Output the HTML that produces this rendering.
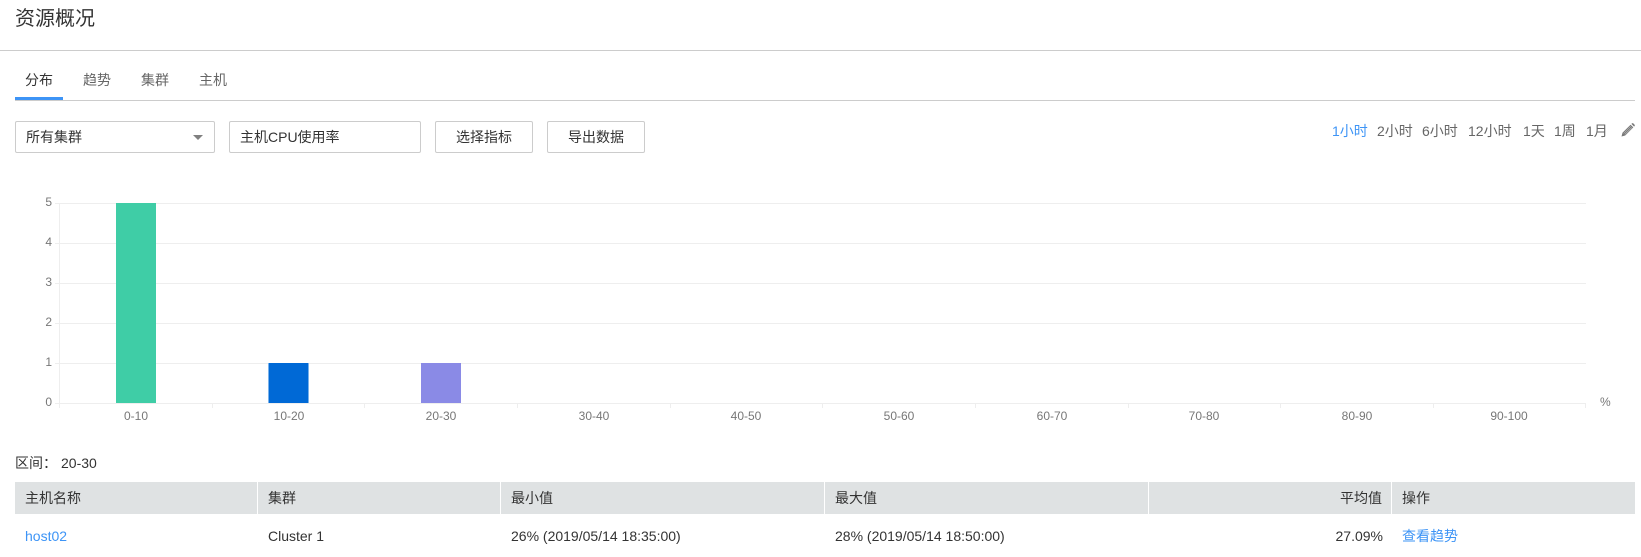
<!DOCTYPE html>
<html>
<head>
<meta charset="utf-8">
<style>
html,body{margin:0;padding:0;background:#fff;}
body{width:1641px;height:557px;position:relative;overflow:hidden;font-family:"Liberation Sans","Noto Sans CJK SC",sans-serif;font-size:14px;color:#333;}
.a{position:absolute;white-space:nowrap;line-height:20px;}
.box{position:absolute;box-sizing:border-box;border:1px solid #ccc;border-radius:2px;background:#fff;height:32px;line-height:30px;}
.h{position:absolute;top:482px;height:32px;background:#dfe2e3;line-height:32px;box-sizing:border-box;padding-left:10px;white-space:nowrap;}
.blue{color:#3d94f6;}
.t{color:#666;font-size:14px;}
svg text{font-family:"Liberation Sans",sans-serif;font-size:12px;fill:#777;}
</style>
</head>
<body>
<div class="a" style="left:15px;top:5px;font-size:20px;line-height:28px;">资源概况</div>
<div style="position:absolute;left:0;top:50px;width:1641px;height:1px;background:#ccc;"></div>

<div class="a" style="left:25px;top:70px;">分布</div>
<div class="a" style="left:83px;top:70px;color:#666;">趋势</div>
<div class="a" style="left:141px;top:70px;color:#666;">集群</div>
<div class="a" style="left:199px;top:70px;color:#666;">主机</div>
<div style="position:absolute;left:15px;top:100px;width:1620px;height:1px;background:#ccc;"></div>
<div style="position:absolute;left:15px;top:97px;width:48px;height:3px;background:#3d94f6;"></div>

<div class="box" style="left:15px;top:121px;width:200px;padding-left:10px;">所有集群</div>
<div style="position:absolute;left:193px;top:135px;width:0;height:0;border-left:5px solid transparent;border-right:5px solid transparent;border-top:5px solid #808080;"></div>
<div class="box" style="left:229px;top:121px;width:192px;padding-left:10px;">主机CPU使用率</div>
<div class="box" style="left:435px;top:121px;width:98px;text-align:center;">选择指标</div>
<div class="box" style="left:547px;top:121px;width:98px;text-align:center;">导出数据</div>

<div class="a t" style="left:1332px;top:121px;color:#3d94f6;">1小时</div>
<div class="a t" style="left:1377px;top:121px;">2小时</div>
<div class="a t" style="left:1422px;top:121px;">6小时</div>
<div class="a t" style="left:1468px;top:121px;">12小时</div>
<div class="a t" style="left:1523px;top:121px;">1天</div>
<div class="a t" style="left:1554px;top:121px;">1周</div>
<div class="a t" style="left:1586px;top:121px;">1月</div>
<svg style="position:absolute;left:1621px;top:123px;" width="14" height="14" viewBox="0 0 14 14"><path d="M0.5 13.5 L1.5 9.8 L9.6 1.7 L12.3 4.4 L4.2 12.5 Z M10.4 0.9 L11.2 0.3 Q11.8 0 12.3 0.4 L13.6 1.7 Q14 2.2 13.7 2.8 L13.1 3.6 Z" fill="#777"/><path d="M2.6 10.4 L9.8 3.2 M3.8 11.4 L11 4.4" stroke="#bbb" stroke-width="0.6" fill="none"/></svg>

<svg style="position:absolute;left:0;top:190px;" width="1641" height="230" viewBox="0 190 1641 230">
<g fill="#eee">
<rect x="55" y="203" width="1531" height="1"/>
<rect x="55" y="243" width="1531" height="1"/>
<rect x="55" y="283" width="1531" height="1"/>
<rect x="55" y="323" width="1531" height="1"/>
<rect x="55" y="363" width="1531" height="1"/>
<rect x="55" y="403" width="1531" height="1"/>
<rect x="59" y="203" width="1" height="205"/>
<rect x="212" y="403" width="1" height="5"/>
<rect x="364" y="403" width="1" height="5"/>
<rect x="517" y="403" width="1" height="5"/>
<rect x="670" y="403" width="1" height="5"/>
<rect x="822" y="403" width="1" height="5"/>
<rect x="975" y="403" width="1" height="5"/>
<rect x="1128" y="403" width="1" height="5"/>
<rect x="1280" y="403" width="1" height="5"/>
<rect x="1433" y="403" width="1" height="5"/>
<rect x="1585" y="403" width="1" height="5"/>
</g>
<rect x="116" y="203" width="40" height="200" fill="#3fcda6"/>
<rect x="268" y="363" width="41" height="40" fill="#7ab2ea"/>
<rect x="269" y="363" width="39" height="40" fill="#0069d6"/>
<rect x="421" y="363" width="40" height="40" fill="#8a8ae6"/>
<g text-anchor="end">
<text x="52" y="206">5</text>
<text x="52" y="246">4</text>
<text x="52" y="286">3</text>
<text x="52" y="326">2</text>
<text x="52" y="366">1</text>
<text x="52" y="406">0</text>
</g>
<g text-anchor="middle">
<text x="136" y="420">0-10</text>
<text x="289" y="420">10-20</text>
<text x="441" y="420">20-30</text>
<text x="594" y="420">30-40</text>
<text x="746" y="420">40-50</text>
<text x="899" y="420">50-60</text>
<text x="1052" y="420">60-70</text>
<text x="1204" y="420">70-80</text>
<text x="1357" y="420">80-90</text>
<text x="1509" y="420">90-100</text>
</g>
<text x="1600" y="406">%</text>
</svg>

<div class="a" style="left:15px;top:453px;">区间：</div>
<div class="a" style="left:61px;top:453px;">20-30</div>

<div class="h" style="left:15px;width:242px;">主机名称</div>
<div class="h" style="left:258px;width:242px;">集群</div>
<div class="h" style="left:501px;width:323px;">最小值</div>
<div class="h" style="left:825px;width:323px;">最大值</div>
<div class="h" style="left:1149px;width:242px;padding:0 9px 0 0;text-align:right;">平均值</div>
<div class="h" style="left:1392px;width:243px;">操作</div>

<div class="a blue" style="left:25px;top:526px;">host02</div>
<div class="a" style="left:268px;top:526px;">Cluster 1</div>
<div class="a" style="left:511px;top:526px;">26% (2019/05/14 18:35:00)</div>
<div class="a" style="left:835px;top:526px;">28% (2019/05/14 18:50:00)</div>
<div class="a" style="left:1149px;width:234px;top:526px;text-align:right;">27.09%</div>
<div class="a blue" style="left:1402px;top:526px;">查看趋势</div>
</body>
</html>
